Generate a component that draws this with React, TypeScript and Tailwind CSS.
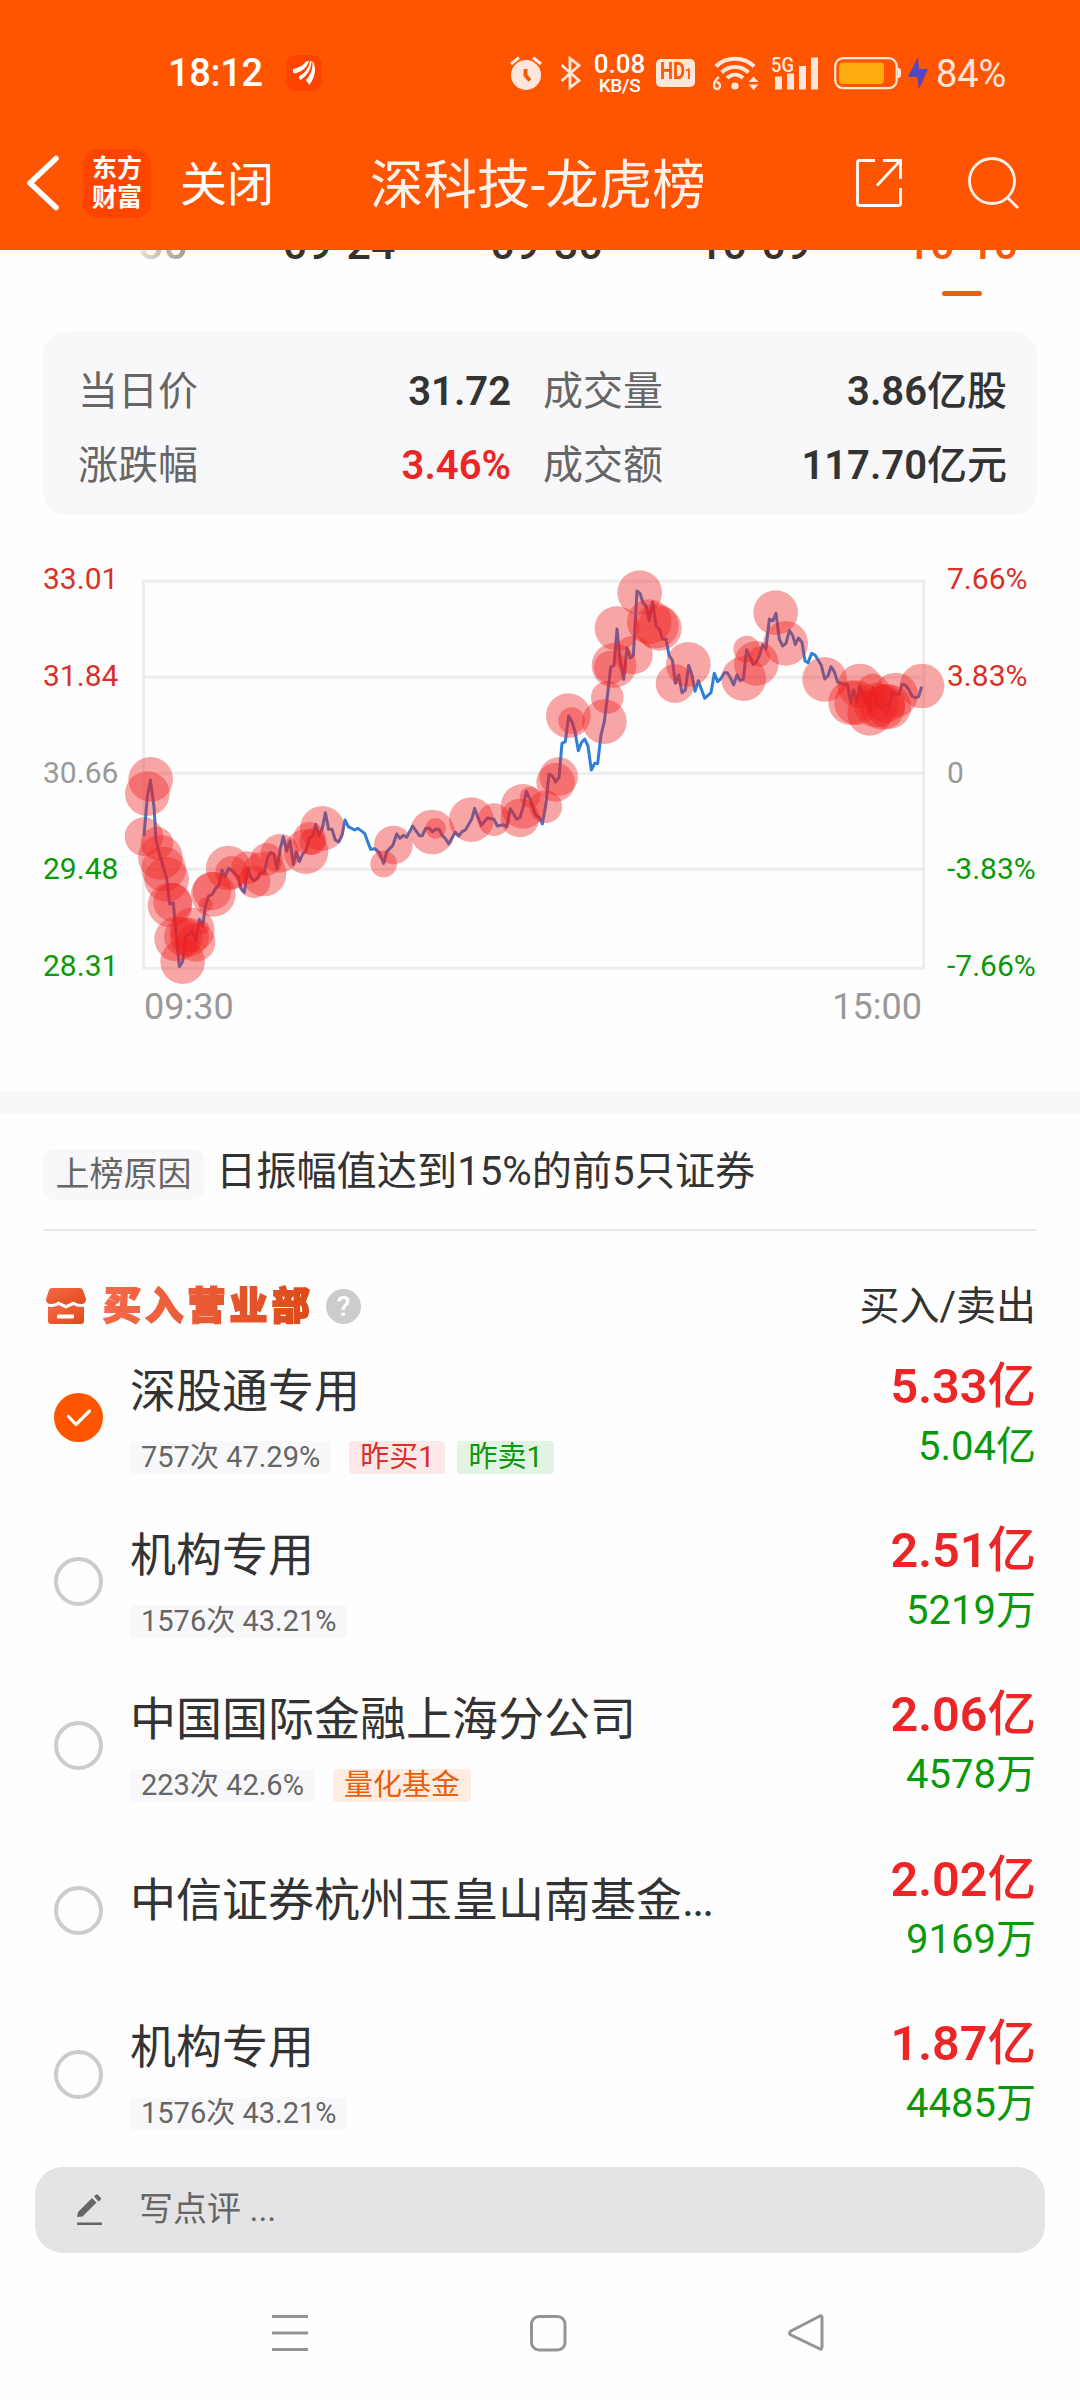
import React from "react";

const PRICE_LINE =
  "432,858 442,740 451,690 462,770 468,870 478,910 488,945 500,985 509,1062 520,1058 528,1150 538,1250 548,1235 557,1160 577,1143 588,1172 598,1108 608,1128 617,1065 626,1038 637,1033 647,1015 657,1005 666,960 675,980 686,955 700,965 715,982 723,1015 733,1028 743,955 752,982 762,992 772,984 782,967 792,970 802,925 812,907 822,912 831,957 841,895 850,860 860,903 870,873 880,943 889,905 898,935 908,912 918,903 928,865 938,858 947,823 957,856 967,835 976,788 986,838 996,838 1006,870 1016,876 1026,855 1035,810 1045,830 1064,840 1074,835 1094,850 1103,875 1112,898 1125,896 1138,908 1151,940 1160,905 1178,887 1190,852 1200,865 1210,856 1220,862 1238,828 1258,857 1267,857 1277,835 1287,834 1297,845 1307,838 1317,838 1327,857 1337,867 1346,882 1366,846 1376,858 1386,845 1396,840 1415,808 1424,775 1434,803 1444,826 1462,804 1482,808 1492,828 1510,824 1520,830 1531,776 1550,807 1560,803 1570,768 1579,724 1590,747 1608,797 1618,802 1627,822 1637,768 1647,672 1657,678 1667,696 1677,682 1686,580 1696,575 1706,497 1716,515 1725,545 1735,602 1744,578 1754,567 1764,588 1774,660 1784,640 1793,641 1803,555 1813,515 1822,440 1832,352 1842,346 1851,237 1860,330 1871,388 1881,294 1891,324 1900,316 1911,123 1920,130 1929,158 1939,170 1948,212 1958,156 1968,228 1978,237 1988,268 1998,268 2007,316 2017,330 2026,400 2036,375 2046,428 2056,420 2066,346 2076,375 2085,424 2095,392 2114,445 2133,428 2143,370 2153,395 2163,385 2173,368 2182,368 2192,385 2201,405 2211,375 2220,392 2230,388 2240,299 2259,343 2269,336 2279,315 2288,284 2298,296 2308,207 2318,213 2328,190 2338,268 2348,288 2358,280 2368,242 2378,256 2386,284 2395,264 2406,277 2415,333 2424,338 2435,310 2445,315 2464,346 2474,387 2484,378 2493,350 2503,365 2513,396 2532,403 2542,403 2552,457 2561,420 2571,457 2580,410 2590,435 2600,455 2609,485 2619,412 2629,450 2638,467 2648,472 2658,462 2667,468 2677,425 2687,433 2697,433 2706,403 2716,405 2726,418 2736,438 2746,443 2756,440 2765,410";

const TRADES: [number, number, number][] = [
  [452, 688, 67], [442, 731, 67], [432, 860, 58], [471, 880, 49], [481, 922, 67], [491, 957, 67],
  [500, 988, 67], [510, 1065, 67], [518, 1057, 58], [530, 1167, 67], [550, 1160, 58], [548, 1235, 67],
  [577, 1140, 67], [588, 1177, 58], [568, 1162, 58], [608, 1133, 20], [617, 1064, 22], [640, 1033, 67],
  [636, 1023, 58], [685, 954, 67], [695, 967, 49], [743, 953, 49], [762, 995, 49], [792, 972, 67],
  [800, 928, 49], [840, 910, 58], [918, 905, 67], [928, 865, 49], [938, 875, 40], [967, 835, 67],
  [1180, 885, 58], [1151, 942, 40], [1297, 846, 67], [1307, 835, 31], [1414, 809, 67], [1482, 809, 49],
  [1560, 804, 58], [1569, 769, 67], [1590, 741, 31], [1637, 770, 49], [1667, 697, 58], [1676, 680, 58],
  [1705, 497, 67], [1715, 512, 40], [1813, 515, 67], [1822, 442, 49], [1842, 346, 67], [1832, 352, 50],
  [1851, 235, 67], [1900, 315, 58], [1919, 128, 67], [1948, 215, 67], [1969, 228, 67], [1978, 235, 67],
  [2025, 401, 58], [2065, 343, 67], [2240, 297, 40], [2231, 386, 67], [2269, 340, 67], [2279, 320, 31],
  [2327, 188, 67], [2357, 280, 67], [2474, 388, 67], [2580, 408, 67], [2552, 458, 67], [2570, 458, 67],
  [2609, 490, 67], [2619, 420, 49], [2629, 465, 67], [2648, 472, 67], [2667, 470, 67], [2687, 435, 67],
  [2658, 460, 58], [2766, 408, 67],
];

function StatusBar() {
  return (
    <div className="flex h-[146px] items-center pl-[168px] text-[#ffe6da]">
      <span className="w-[118px] text-[38px] font-medium tracking-[-0.3px] text-white">18:12</span>
      <span className="flex h-9 w-9 items-center justify-center rounded-[9px] bg-[#ff4400]">
        <svg width="24" height="26" viewBox="0 0 24 26" fill="#fff">
          <path d="M1 9C6 8 11 6 14 1.500L17 1C15 8 9 12.500 2 13.500C1 12 .8 10.500 1 9Z" />
          <path d="M18 1L19.500 1C19.500 9 15 16 8.500 20C7.500 19 7 18 7 16.500C13 13 17 8 18 1Z" />
          <path d="M20.500 1C25 8 23 17 17.500 25C16 23 14.500 21.500 14 20C18.500 15 21 9 20.500 1Z" />
        </svg>
      </span>
      <svg className="ml-[188px]" width="32" height="34" viewBox="0 0 32 34">
        <circle cx="16" cy="19" r="15" fill="#ffe6da" />
        <path d="M1 8L9 1.500M31 8L23 1.500" stroke="#ffe6da" strokeWidth="3" fill="none" />
        <path d="M15.500 13V19.500L20 24.500" stroke="#ff5500" strokeWidth="3.800" fill="none" />
      </svg>
      <svg className="ml-[18px]" width="21" height="34" viewBox="0 0 21 34" fill="none" stroke="#ffe6da" strokeWidth="2.800">
        <path d="M1.500 9L19 24.500L10 31.500V2.500L19 9.500L1.500 25" />
      </svg>
      <span className="ml-[10px] flex w-[57px] flex-col items-center font-medium text-white">
        <span className="text-[26px] leading-[24px]">0.08</span>
        <span className="text-[19px] leading-[19px] tracking-[-0.3px]">KB/S</span>
      </span>
      <span className="ml-[8px] flex h-[28px] w-[39px] items-center justify-center rounded-[5px] bg-[#ffe6da] text-[#ff5500]">
        <span className="scale-x-[0.8] text-[23px] font-bold leading-[28px]">HD<span className="text-[15px]">1</span></span>
      </span>
      <svg className="ml-[17px]" width="48" height="36" viewBox="0 0 48 36" fill="none" stroke="#ffe6da">
        <path d="M4 11.500C14 1 32 1 42 11.500" strokeWidth="4" />
        <path d="M9.500 17.500C17 10 29 10 36.500 17.500" strokeWidth="4" />
        <path d="M15 23C20 18.500 26 18.500 31 23" strokeWidth="4" />
        <circle cx="23" cy="31" r="3.600" fill="#ffe6da" stroke="none" />
        <path d="M7 22C3 25 2 28 2 30.500A3 3.300 0 1 0 4.500 27.500" strokeWidth="2.400" />
        <path d="M36.500 27L41.500 21.500L46.500 27ZM36.500 29.500L41.500 35L46.500 29.500Z" fill="#ffe6da" stroke="none" />
      </svg>
      <svg className="ml-[11px]" width="48" height="36" viewBox="0 0 48 36" fill="#ffe6da">
        <text x="0" y="17" fontSize="21" fontWeight="500" textLength="23" lengthAdjust="spacingAndGlyphs">5G</text>
        <path d="M4 21.500h7v13h-7zM16 18.500h7v16h-7zM28 11h7v23.500h-7zM40 2.500h7v32h-7z" />
      </svg>
      <svg className="ml-[15px]" width="68" height="34" viewBox="0 0 68 34">
        <rect x="1.200" y="2.200" width="61.500" height="30" rx="8" fill="none" stroke="#ffe6da" strokeWidth="2.200" />
        <rect x="5" y="6.500" width="45" height="21.500" rx="4" fill="#ffab0d" />
        <path d="M64 12Q67 12 67 15V19Q67 22 64 22Z" fill="#ffe6da" />
      </svg>
      <svg className="ml-[6px]" width="20" height="32" viewBox="0 0 20 32">
        <path d="M10 0L0 20H9L11 32L20 12H11Z" fill="#5445c0" />
      </svg>
      <span className="ml-[8px] mt-[3px] text-[38px] tracking-[-0.1px]">84%</span>
    </div>
  );
}

function NavBar() {
  return (
    <div className="flex h-[74px] items-center pl-[26px] text-white">
      <svg width="34" height="56" viewBox="0 0 34 56" fill="none" stroke="#fff" strokeWidth="5.500" strokeLinecap="round" strokeLinejoin="round">
        <path d="M30 3.500L4 28L30 52.500" />
      </svg>
      <div className="ml-[23px] flex h-[69px] w-[68px] flex-col items-center justify-center rounded-[15px] bg-[#ff4400] text-[25px] font-bold leading-[29px]">
        <span>东方</span>
        <span>财富</span>
      </div>
      <span className="ml-[29px] mt-[3px] w-[190px] text-[47px] leading-[60px]">关闭</span>
      <span className="mt-[6px] w-[485px] text-[53.500px] leading-[64px] text-[#fff2ec]">深科技-龙虎榜</span>
      <svg width="48" height="50" viewBox="0 0 48 50" fill="none" stroke="#fff" strokeWidth="2.800">
        <path d="M20 2.500H4.500Q2.500 2.500 2.500 4.500V45.500Q2.500 47.500 4.500 47.500H43.500Q45.500 47.500 45.500 45.500V30M28 2.500H45.500V21M45 3L22 27.500" />
      </svg>
      <svg className="ml-[65px]" width="52" height="52" viewBox="0 0 52 52" fill="none" stroke="#fff2ec" strokeWidth="2.800">
        <circle cx="24" cy="24" r="22.500" />
        <path d="M39 40L50 51" />
      </svg>
    </div>
  );
}

function DateTabs() {
  const cls = "w-[207.500px] shrink-0 text-center";
  return (
    <div className="h-[81px] overflow-hidden">
      <div className="-mt-[31px] ml-[28px] flex text-[43px] font-medium leading-[50px] text-[#333]">
        <span className={cls}>
          <span className="bg-linear-to-r from-white from-40% to-[#999] bg-clip-text text-transparent">08-30</span>
        </span>
        <span className={cls}>09-24</span>
        <span className={cls}>09-30</span>
        <span className={cls}>10-09</span>
        <span className="ml-[2px] flex w-[204px] shrink-0 flex-col items-center text-[#f5590a]">
          10-10
          <span className="mt-[22px] h-[5px] w-10 rounded-full bg-[#f5590a]" />
        </span>
      </div>
    </div>
  );
}

function Summary() {
  return (
    <div className="mx-[43px] grid h-[184px] grid-cols-[465px_466px] content-center gap-y-[14px] rounded-[24px] bg-[#f8f8fa] pl-[35px] pt-[12px] text-[40px] leading-[60px] text-[#666]">
      <div className="flex justify-between pr-[32px]">
        <span>当日价</span>
        <span className="font-semibold text-[#333]">31.72</span>
      </div>
      <div className="flex justify-between pr-[2px]">
        <span>成交量</span>
        <span className="font-medium text-[#333]"><b className="font-semibold">3.86</b>亿股</span>
      </div>
      <div className="flex justify-between pr-[32px]">
        <span>涨跌幅</span>
        <span className="font-semibold text-[#ec2626]">3.46%</span>
      </div>
      <div className="flex justify-between pr-[2px]">
        <span>成交额</span>
        <span className="font-medium text-[#333]"><b className="font-semibold">117.70</b>亿元</span>
      </div>
    </div>
  );
}

function Chart() {
  return (
    <div className="mt-[35px]">
      <div className="flex h-[440px] text-[30px] leading-[40px]">
        <div className="flex w-[125px] flex-col justify-between pb-[4px] pl-[43px] pt-[9px] text-[#d9302a]">
          <span>33.01</span>
          <span>31.84</span>
          <span className="text-[#999]">30.66</span>
          <span className="text-[#0a990a]">29.48</span>
          <span className="text-[#0a990a]">28.31</span>
        </div>
        <svg width="820" height="440" viewBox="375 0 2460 1320" fill="none">
          <path
            d="M431 94H2771M431 382H2771M431 670H2771M431 958H2771M431 1255H2771M431 90V1258M2771 90V1258"
            stroke="#ededed"
            strokeWidth="9"
          />
          <polyline points={PRICE_LINE} stroke="#2f7fd6" strokeWidth="9" strokeLinejoin="round" />
          {TRADES.map(([x, y, r], i) => (
            <circle key={i} cx={x} cy={y} r={r} fill="#f02020" fillOpacity="0.4" />
          ))}
        </svg>
        <div className="flex flex-col justify-between pb-[4px] pl-[2px] pt-[9px] text-[#d9302a]">
          <span>7.66%</span>
          <span>3.83%</span>
          <span className="text-[#999]">0</span>
          <span className="text-[#0a990a]">-3.83%</span>
          <span className="text-[#0a990a]">-7.66%</span>
        </div>
      </div>
      <div className="flex h-[101px] justify-between pl-[144px] pr-[158px] text-[36px] leading-[35px] text-[#999]">
        <span>09:30</span>
        <span>15:00</span>
      </div>
    </div>
  );
}

type Row = {
  name: string;
  stat?: string;
  tags?: { text: string; cls: string }[];
  buy: string;
  sell: string;
  unit: string;
  checked?: boolean;
};

const ROWS: Row[] = [
  {
    name: "深股通专用",
    stat: "757次 47.29%",
    tags: [
      { text: "昨买1", cls: "bg-[#fde8e8] text-[#d9302a]" },
      { text: "昨卖1", cls: "bg-[#e4f4e4] text-[#0a990a]" },
    ],
    buy: "5.33",
    sell: "5.04",
    unit: "亿",
    checked: true,
  },
  { name: "机构专用", stat: "1576次 43.21%", buy: "2.51", sell: "5219", unit: "万" },
  {
    name: "中国国际金融上海分公司",
    stat: "223次 42.6%",
    tags: [{ text: "量化基金", cls: "bg-[#ffede4] text-[#e8600c]" }],
    buy: "2.06",
    sell: "4578",
    unit: "万",
  },
  { name: "中信证券杭州玉皇山南基金...", buy: "2.02", sell: "9169", unit: "万" },
  { name: "机构专用", stat: "1576次 43.21%", buy: "1.87", sell: "4485", unit: "万" },
];

function BrokerRow({ row }: { row: Row }) {
  const base = row.name.replace("...", "");
  return (
    <div className="flex h-[164.200px] pl-[54px] pr-[44px]">
      {row.checked ? (
        <span className="mt-[57px] flex h-[49px] w-[49px] items-center justify-center rounded-full bg-[#ff5500]">
          <svg width="26" height="20" viewBox="0 0 26 20" fill="none" stroke="#fff" strokeWidth="3.200" strokeLinecap="round" strokeLinejoin="round">
            <path d="M2.500 8.500L10 16.500L23.500 3" />
          </svg>
        </span>
      ) : (
        <span className="mt-[57px] h-[49px] w-[49px] rounded-full border-4 border-[#ccc]" />
      )}
      <div className={row.stat ? "ml-[27px] mt-[26.500px]" : "ml-[27px] mt-[43px]"}>
        <div className="text-[46px] leading-[56px] text-[#333]">
          {base}
          {base !== row.name && <span className="tracking-[-2px]">...</span>}
        </div>
        {row.stat && (
          <div className="mt-[22px] flex text-[29px] leading-[33px]">
            <span className="mr-[18px] rounded-[4px] bg-[#f8f8fa] px-[11px] text-[#666]">{row.stat}</span>
            {row.tags?.map((t) => (
              <span key={t.text} className={"mr-[12px] rounded-[4px] px-[11px] " + t.cls}>
                {t.text}
              </span>
            ))}
          </div>
        )}
      </div>
      <div className="ml-auto mt-[21px] text-right">
        <div className="text-[48.500px] font-medium leading-[60px] text-[#ec2626]">
          <b className="font-semibold">{row.buy}</b>亿
        </div>
        <div className="text-[40px] leading-[60px] text-[#0a990a]">{row.sell + row.unit}</div>
      </div>
    </div>
  );
}

export default function App() {
  return (
    <div className="flex h-[2400px] w-[1080px] flex-col overflow-hidden whitespace-nowrap bg-[#fefefe] font-[Roboto,'Noto_Sans_CJK_SC',sans-serif]">
      <header className="h-[250px] shrink-0 bg-[#ff5500]">
        <StatusBar />
        <NavBar />
      </header>
      <DateTabs />
      <Summary />
      <Chart />
      <div className="h-[23px] bg-[#f8f8fa]" />
      <div className="mx-[43px] flex h-[117px] items-center border-b-2 border-[#e8e8e8]">
        <span className="mt-[6px] h-[51px] rounded-[12px] bg-[#f8f8fa] px-[12.500px] text-[34px] leading-[50px] text-[#666]">上榜原因</span>
        <span className="ml-[12px] mt-[2px] text-[40.200px] text-[#333]">日振幅值达到15%的前5只证券</span>
      </div>
      <div className="flex h-[105px] items-center pl-[46px] pr-[44px] pt-[45px]">
        <svg width="40" height="36" viewBox="0 0 40 36">
          <defs>
            <linearGradient id="shop" x1="0" y1="0" x2="1" y2="1">
              <stop offset="0" stopColor="#f5694a" />
              <stop offset="1" stopColor="#e04a14" />
            </linearGradient>
          </defs>
          <path d="M6 0H34Q36 0 37 2L40 11Q40 16 35 16Q31 16 27.500 13.500L20 17L12.500 13.500Q9 16 5 16Q0 16 0 11L3 2Q4 0 6 0Z" fill="url(#shop)" />
          <path d="M2 18.500Q8 20 12.500 17L20 20.500L27.500 17Q32 20 38 18.500V33Q38 36 35 36H5Q2 36 2 33Z" fill="url(#shop)" />
          <rect x="11" y="26.500" width="17" height="4" rx="1" fill="#fff" />
        </svg>
        <span className="ml-[17px] bg-linear-to-r from-[#f5694a] to-[#dc4a14] bg-clip-text text-[38px] font-black leading-[50px] tracking-[4.200px] text-transparent [-webkit-text-stroke:1.800px_transparent]">
          买入营业部
        </span>
        <span className="ml-[12px] flex h-[35px] w-[35px] items-center justify-center rounded-full bg-[#ccc] text-[28px] font-medium leading-[35px] text-white">?</span>
        <span className="ml-auto mt-[2px] text-[40px] leading-[50px] text-[#333]">买入/卖出</span>
      </div>
      {ROWS.map((row, i) => (
        <BrokerRow key={i} row={row} />
      ))}
      <div className="mx-[35px] mt-[10px] flex h-[86px] shrink-0 items-center rounded-[28px] bg-[#e4e4e6] pl-[42px] text-[34px] text-[#666]">
        <svg width="26" height="32" viewBox="0 0 26 32" fill="#666">
          <path d="M0 23L1 18L15 4L19.500 8.500L5.500 22.500ZM17 2.500L19 .5Q20 0 21 1L24 4Q24.500 5 23.500 6L21.500 7.500ZM0 28.500H25V31H0Z" />
        </svg>
        <span className="ml-[36px]">写点评 ...</span>
      </div>
      <div className="flex items-center pl-[271px] pt-[61px]">
        <svg width="553" height="38" viewBox="0 0 553 38" fill="none" stroke="#949494" strokeWidth="3">
          <path d="M1 2.500H37M1 19H37M1 35.500H37" />
          <rect x="260.500" y="2.500" width="33.500" height="33.500" rx="7.500" />
          <path d="M548 2.500Q551 .5 551 4V33Q551 36.500 548 34.500L520 21Q517 19 520 17Z" />
        </svg>
      </div>
    </div>
  );
}
